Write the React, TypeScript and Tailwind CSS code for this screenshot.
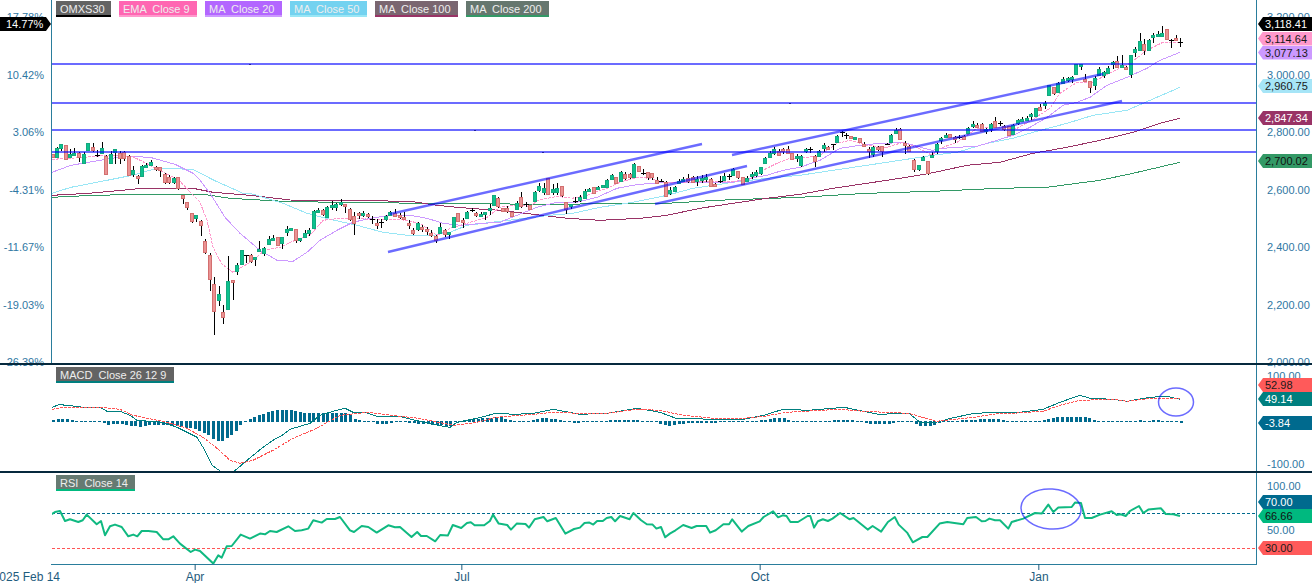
import React from "react";

type P = [number, number];
type C = [number, number, number, number, number, number];

const T = (ox: number, oy: number, sx: number, sy: number, a: P[]): P[] =>
  a.map(([x, y]) => [ox + x / sx, oy + y / sy] as P);
const TC = (ox: number, oy: number, sx: number, sy: number, a: C[]): C[] =>
  a.map(([x, k, t, b, h, l]) => [ox + x / sx, k, oy + t / sy, oy + b / sy, oy + h / sy, oy + l / sy] as C);
const pts = (a: P[]) => a.map((p) => p[0].toFixed(1) + "," + (p[1] + 0.3).toFixed(1)).join(" ");

// x, kind (0 red, 1 green, 2 black doji), body top, body bottom, high, low
const candles: C[] = [
  ...TC(0, 0, 2.8, 3, [
    [147, 0, 462, 470, 462, 470], [159, 1, 445, 470, 440, 470], [170, 1, 433, 443, 432, 452], [184, 0, 436, 477, 434, 478],
    [196, 1, 462, 472, 448, 475], [208, 1, 459, 463, 445, 470], [221, 0, 459, 472, 456, 485], [235, 1, 463, 488, 455, 489],
    [246, 1, 429, 449, 428, 450], [260, 0, 442, 450, 430, 458], [272, 2, 464, 464, 450, 470], [285, 1, 445, 459, 426, 463],
    [297, 0, 467, 521, 466, 522], [310, 1, 462, 490, 452, 492], [321, 1, 448, 456, 446, 490], [335, 0, 458, 475, 453, 492],
    [347, 0, 455, 475, 453, 482], [360, 0, 467, 525, 466, 528], [372, 1, 511, 521, 499, 532], [385, 0, 528, 533, 526, 552],
    [397, 1, 497, 527, 496, 532], [410, 1, 496, 498, 490, 502], [422, 1, 487, 495, 480, 497], [437, 0, 502, 507, 497, 512],
    [449, 0, 502, 509, 500, 530], [462, 0, 522, 545, 520, 552], [473, 0, 531, 545, 525, 552], [487, 1, 534, 545, 530, 552],
    [498, 0, 532, 565, 530, 568],
  ]),
  ...TC(150, 180, 3, 3, [
    [98, 0, 45, 53, 45, 72], [110, 0, 67, 80, 65, 90], [125, 0, 100, 122, 98, 128], [138, 1, 106, 113, 104, 125], [152, 0, 123, 134, 120, 167],
    [165, 0, 183, 215, 178, 224], [180, 0, 225, 298, 220, 333], [191, 0, 312, 392, 292, 465], [206, 1, 343, 359, 318, 378], [218, 0, 397, 410, 375, 432],
    [233, 1, 303, 386, 228, 386], [248, 0, 301, 307, 300, 360], [261, 1, 256, 274, 250, 285], [275, 1, 211, 251, 210, 252], [288, 2, 226, 226, 226, 250],
    [302, 0, 226, 242, 222, 250], [315, 1, 232, 238, 232, 260], [328, 1, 208, 211, 183, 215], [341, 1, 203, 218, 201, 228], [356, 1, 178, 191, 168, 192],
    [369, 1, 175, 178, 166, 180], [384, 0, 172, 194, 172, 200], [396, 1, 172, 188, 170, 207], [410, 1, 147, 155, 138, 168], [422, 1, 145, 151, 145, 152],
    [437, 0, 148, 180, 147, 188], [449, 1, 175, 179, 174, 187], [465, 1, 160, 171, 150, 175], [477, 1, 150, 160, 145, 170], [491, 1, 94, 143, 90, 144],
    [504, 1, 91, 93, 85, 95], [519, 0, 91, 102, 88, 108], [531, 1, 80, 110, 78, 111], [546, 1, 75, 80, 62, 90], [558, 1, 72, 82, 70, 95],
    [572, 1, 65, 72, 58, 80], [585, 0, 72, 76, 71, 97], [599, 0, 87, 116, 85, 125], [612, 0, 108, 130, 95, 165], [626, 0, 100, 102, 95, 115],
    [639, 1, 100, 106, 92, 110], [653, 0, 102, 105, 98, 112], [666, 2, 118, 118, 108, 132], [680, 0, 129, 133, 118, 148], [693, 2, 125, 125, 118, 145],
    [707, 1, 108, 118, 105, 122], [720, 1, 97, 105, 92, 106], [735, 0, 100, 108, 88, 110], [749, 0, 105, 108, 100, 118], [761, 0, 110, 116, 96, 118],
    [776, 0, 129, 133, 120, 147], [789, 0, 150, 160, 145, 165], [803, 1, 130, 147, 125, 152], [816, 0, 142, 148, 135, 155], [830, 0, 147, 151, 140, 163],
    [843, 0, 160, 164, 150, 170], [857, 0, 168, 180, 165, 190], [870, 1, 142, 158, 130, 160], [885, 0, 150, 163, 147, 170], [896, 1, 157, 160, 157, 177],
    [911, 1, 112, 141, 110, 142], [924, 0, 100, 122, 100, 127], [938, 0, 120, 125, 115, 145], [951, 1, 97, 113, 92, 115], [965, 2, 90, 90, 83, 97],
    [978, 0, 100, 106, 95, 110], [992, 1, 101, 106, 96, 112], [1005, 1, 97, 103, 95, 118], [1019, 1, 85, 90, 73, 105], [1032, 1, 46, 75, 45, 78],
    [1045, 0, 55, 78, 50, 82],
  ]),
  ...TC(500, 120, 3, 3, [
    [9, 0, 265, 272, 263, 276], [22, 0, 263, 272, 258, 278], [36, 0, 275, 288, 275, 290], [51, 1, 248, 266, 243, 270], [63, 0, 232, 257, 215, 262],
    [77, 2, 252, 252, 245, 260], [90, 0, 256, 266, 255, 270], [105, 1, 216, 242, 213, 243], [117, 1, 198, 209, 188, 215], [131, 1, 205, 215, 190, 225],
    [144, 0, 175, 221, 173, 222], [158, 1, 208, 215, 192, 225], [171, 1, 205, 216, 190, 225], [185, 0, 198, 226, 197, 230], [198, 0, 246, 268, 245, 280],
    [212, 1, 252, 256, 251, 265], [226, 2, 243, 243, 232, 248], [239, 1, 232, 240, 225, 245], [255, 1, 214, 235, 208, 238], [267, 1, 208, 212, 205, 215],
    [282, 0, 202, 218, 200, 220], [294, 1, 202, 206, 198, 210], [308, 1, 196, 201, 195, 205], [321, 1, 180, 200, 178, 205], [335, 1, 166, 176, 162, 180],
    [348, 0, 172, 188, 170, 192], [362, 1, 156, 184, 153, 185], [375, 0, 163, 173, 155, 178], [389, 0, 163, 172, 160, 178], [402, 1, 132, 172, 130, 175],
    [417, 0, 138, 152, 137, 153], [429, 2, 160, 160, 148, 165], [444, 0, 157, 170, 156, 180], [456, 0, 160, 172, 158, 180], [471, 0, 180, 189, 172, 192],
    [483, 2, 183, 183, 178, 187], [498, 0, 186, 228, 183, 228], [510, 1, 210, 218, 202, 225], [525, 1, 201, 212, 198, 215], [537, 1, 183, 187, 178, 192],
    [550, 1, 176, 181, 172, 188], [564, 0, 175, 184, 162, 188], [579, 0, 170, 186, 168, 188], [590, 1, 176, 180, 168, 197], [605, 1, 173, 176, 165, 190],
    [618, 1, 172, 177, 162, 185], [632, 0, 176, 198, 175, 200], [645, 0, 192, 197, 190, 200], [659, 2, 183, 183, 168, 188], [672, 1, 168, 180, 160, 185],
    [686, 2, 168, 168, 162, 180], [699, 1, 148, 165, 143, 168], [714, 0, 153, 172, 152, 175], [729, 0, 172, 192, 170, 195], [741, 1, 174, 182, 168, 185],
    [755, 1, 163, 168, 155, 175], [768, 1, 156, 166, 150, 170], [782, 1, 142, 160, 140, 165], [795, 1, 114, 128, 112, 130], [809, 1, 98, 110, 92, 112],
    [822, 1, 88, 100, 80, 105], [836, 0, 92, 104, 88, 107], [849, 0, 88, 92, 85, 102], [863, 0, 88, 98, 78, 100], [876, 0, 98, 118, 98, 120],
    [890, 1, 107, 112, 103, 127],
  ]),
  ...TC(800, 60, 3, 3, [
    [4, 1, 287, 316, 285, 320], [17, 1, 266, 272, 264, 280], [29, 2, 268, 268, 262, 278], [44, 0, 288, 303, 285, 320], [57, 1, 272, 288, 270, 290],
    [71, 1, 256, 265, 250, 278], [84, 0, 262, 267, 258, 270], [98, 2, 253, 253, 252, 270], [111, 1, 229, 245, 226, 247], [125, 2, 217, 217, 212, 230],
    [138, 2, 224, 224, 220, 237], [152, 0, 228, 235, 227, 237], [165, 1, 232, 234, 230, 240], [180, 0, 235, 247, 234, 248], [192, 0, 252, 256, 245, 258],
    [207, 0, 266, 274, 262, 296], [219, 1, 260, 281, 258, 290], [233, 0, 262, 267, 258, 272], [246, 0, 258, 273, 257, 290], [260, 2, 253, 253, 248, 256],
    [273, 1, 226, 245, 222, 248], [288, 1, 210, 218, 203, 222], [299, 0, 208, 236, 203, 238], [315, 0, 248, 254, 242, 280], [327, 0, 257, 272, 255, 275],
    [342, 0, 300, 327, 296, 335], [356, 1, 316, 326, 314, 332], [369, 1, 290, 301, 287, 303], [384, 0, 303, 340, 302, 344], [396, 1, 285, 290, 276, 292],
    [411, 1, 253, 274, 248, 280], [423, 1, 234, 239, 230, 250], [438, 1, 225, 232, 220, 236], [450, 0, 223, 231, 222, 233], [464, 0, 232, 236, 228, 248],
    [477, 2, 232, 232, 226, 238], [491, 0, 228, 236, 225, 240], [504, 1, 204, 218, 200, 220], [519, 1, 193, 197, 183, 203], [532, 0, 194, 196, 188, 204],
    [546, 0, 193, 214, 190, 216], [559, 1, 207, 212, 205, 222], [573, 1, 192, 208, 188, 215], [585, 0, 183, 202, 172, 204], [600, 2, 189, 189, 182, 197],
    [613, 0, 197, 208, 195, 212], [627, 0, 199, 224, 198, 225], [640, 1, 195, 222, 192, 225], [654, 1, 180, 190, 178, 195], [667, 1, 178, 183, 172, 188],
    [682, 1, 174, 178, 168, 182], [694, 1, 162, 166, 158, 178], [709, 1, 144, 167, 143, 168], [720, 0, 142, 150, 132, 152], [735, 1, 128, 136, 122, 147],
    [747, 1, 76, 104, 74, 108], [762, 0, 82, 98, 80, 105], [774, 1, 68, 97, 66, 98], [789, 1, 58, 68, 52, 72], [803, 1, 55, 60, 50, 65],
    [816, 1, 52, 58, 48, 70], [829, 1, 13, 41, 12, 42], [842, 1, 11, 16, 11, 30], [856, 0, 57, 62, 42, 63], [870, 0, 64, 82, 62, 97],
    [884, 1, 55, 75, 48, 90], [897, 1, 28, 46, 20, 48], [911, 1, 35, 44, 32, 52], [924, 1, 24, 40, 18, 42], [938, 1, 6, 9, 2, 25],
    [951, 0, 2, 22, -12, 25], [965, 1, 14, 20, -15, 22], [978, 0, 22, 28, 18, 30],
  ]),
  ...TC(1000, 0, 3, 3, [
    [392, 1, 165, 222, 165, 233], [405, 1, 148, 155, 140, 170], [419, 1, 124, 150, 98, 152], [431, 0, 132, 150, 118, 165], [447, 1, 120, 150, 118, 155],
    [459, 1, 105, 108, 100, 130], [473, 1, 102, 105, 92, 110], [485, 1, 100, 108, 78, 112], [501, 0, 88, 118, 88, 120], [513, 2, 121, 121, 118, 143],
    [527, 0, 114, 120, 105, 123], [540, 2, 125, 125, 115, 140],
  ]),
];

const ema: P[] = [[52,159],[71,158],[107,155],[132,156],[150,165],[164,172],[179,180],[200,202],[207,220],[213,247],[222,264],[233,272],[250,262],[265,250],[280,247],[295,240],[310,235],[323,220],[340,218],[355,218],[370,219],[400,219],[420,223],[437,235],[450,228],[467,223],[487,217],[500,207],[515,205],[530,206],[538,200],[557,196],[572,198],[587,195],[607,188],[620,182],[637,177],[650,178],[663,182],[680,182],[700,181],[717,181],[733,181],[748,180],[763,170],[777,163],[790,158],[800,158],[820,155],[837,143],[850,140],[867,145],[887,147],[903,142],[917,147],[932,155],[940,148],[957,142],[977,128],[1000,127],[1017,128],[1033,119],[1050,108],[1060,93],[1077,82],[1093,82],[1107,74],[1130,63],[1147,50],[1163,42],[1180,42]];
const ma20: P[] = [[52,172],[71,165],[100,160],[125,156],[150,157],[175,164],[193,173],[200,180],[210,193],[225,217],[240,233],[260,250],[277,260],[293,261],[307,252],[320,240],[337,230],[353,222],[370,218],[390,215],[410,215],[427,218],[443,223],[460,225],[483,223],[500,222],[517,215],[537,207],[557,202],[577,202],[597,197],[617,188],[633,185],[650,183],[667,182],[700,182],[733,182],[750,178],[767,175],[783,170],[800,167],[820,160],[840,148],[867,144],[887,143],[903,142],[917,146],[932,150],[943,148],[957,147],[977,146],[997,140],[1013,135],[1030,127],[1047,117],[1063,105],[1077,102],[1090,97],[1107,85],[1127,77],[1147,68],[1160,60],[1180,52]];
const ma50: P[] = [[52,193],[71,187],[107,180],[132,175],[157,168],[193,169],[214,180],[243,193],[250,193],[283,203],[307,213],[330,219],[357,225],[383,232],[407,235],[433,235],[450,232],[467,225],[500,221],[550,215],[573,213],[600,207],[633,202],[667,195],[693,188],[713,185],[733,182],[767,178],[800,175],[833,170],[867,165],[900,160],[933,155],[957,152],[987,143],[1013,138],[1033,132],[1067,123],[1093,115],[1127,110],[1150,100],[1180,87]];
const ma100: P[] = [[52,195],[89,193],[143,188],[179,188],[193,188],[213,192],[250,195],[293,200],[337,200],[410,201],[437,205],[457,207],[483,209],[500,210],[533,214],[567,218],[600,220],[640,218],[667,215],[700,208],[733,203],[767,198],[800,194],[833,188],[867,183],[900,178],[930,173],[967,165],[1000,162],[1033,153],[1067,147],[1100,140],[1133,132],[1160,123],[1180,118]];
const ma200: P[] = [[52,197],[93,195],[150,194],[203,194],[230,198],[283,201],[333,202],[427,203],[543,204],[667,203],[717,200],[800,197],[867,193],[933,191],[1000,188],[1047,187],[1100,180],[1133,173],[1180,162]];

const macd: P[] = [[52,407],[60,404],[65,405],[77,406],[82,407],[100,407],[107,411],[120,411],[130,415],[137,420],[163,422],[177,427],[197,437],[203,447],[212,465],[222,472],[233,472],[247,460],[263,447],[273,440],[282,435],[290,429],[310,423],[320,415],[333,411],[345,408],[353,412],[365,412],[377,416],[400,416],[411,419],[438,425],[450,427],[457,422],[477,418],[496,413],[515,414],[534,413],[553,409],[580,414],[607,413],[637,408],[660,412],[676,418],[714,419],[744,419],[764,415],[783,409],[809,410],[844,407],[878,414],[909,413],[920,422],[936,422],[951,418],[974,413],[1000,412],[1020,412],[1043,409],[1060,402],[1080,395],[1090,398],[1113,399],[1127,401],[1150,397],[1167,396],[1180,399]];
const signal: P[] = [[52,409],[63,407],[100,407],[120,409],[133,415],[167,422],[187,428],[203,437],[217,448],[230,460],[240,463],[253,460],[273,450],[293,438],[317,428],[340,415],[367,412],[400,416],[419,418],[438,422],[454,425],[477,422],[496,417],[534,414],[553,412],[580,413],[607,413],[637,409],[660,410],[683,415],[714,418],[744,418],[764,416],[787,412],[840,409],[863,411],[909,413],[936,421],[974,417],[1000,413],[1013,413],[1043,411],[1060,405],[1080,400],[1113,399],[1127,401],[1150,398],[1180,398]];

const histKeys: P[] = [[53,2.3],[57,3.3],[61,3.3],[66,2.7],[70,2.3],[75,1.5],[80,1],[84,.7],[88,1],[93,.7],[97,.5],[102,-.7],[107,-3.7],[120,-3],[125,-4],[134,-5],[138,-6.3],[143,-5.7],[147,-4.7],[152,-4],[161,-4],[170,-4.7],[174,-5.3],[183,-6],[188,-7],[197,-8.7],[202,-10.7],[206,-12.7],[211,-16],[215,-20],[220,-20],[224,-19.3],[229,-16],[233,-12],[238,-8],[242,-2],[247,2],[251,4],[256,5],[260,7.3],[265,9],[269,10.7],[274,11.7],[292,11.7],[296,10.7],[301,10],[305,9.3],[310,9],[345,9],[350,8],[354,3],[359,2],[363,1],[368,.7],[373,-1],[377,-2.5],[390,-2.5],[395,-1.5],[400,-1],[410,-2],[420,-3],[430,-3.5],[445,-4.5],[450,-5],[453,-1],[461,1],[467,1.5],[473,2.5],[480,3.5],[492,4],[496,5],[501,4.5],[507,2.5],[513,1],[522,1],[530,1.5],[535,2],[540,3.5],[550,3.5],[555,3],[559,2],[563,.5],[568,-.5],[572,-2],[580,-2],[585,-1],[590,-.5],[595,-.5],[603,1],[608,1.5],[614,2],[625,2],[631,2.5],[637,2],[645,1],[653,0],[660,-2.5],[666,-4.5],[670,-4.5],[675,-3.5],[685,-2.5],[700,-2],[710,-1.5],[716,-2.5],[721,-.5],[727,.5],[733,1],[744,.5],[750,0],[763,2],[767,2.5],[773,4],[780,4.5],[785,3.5],[792,1],[800,1],[811,0],[832,1.5],[845,2],[852,1.5],[857,0],[863,-1],[869,-2.5],[880,-3],[892,-2.5],[898,-.5],[905,-.5],[913,-1.5],[919,-4.5],[924,-5.5],[930,-5],[936,-3],[941,-1.5],[947,1],[958,1.5],[972,2],[980,3],[1000,3],[1006,1],[1027,-1],[1040,1.5],[1048,3],[1058,5],[1085,5],[1091,3],[1095,1],[1105,.3],[1122,-.5],[1127,-.5],[1132,.3],[1140,2],[1145,1],[1149,1.5],[1162,1.5],[1167,.7],[1172,-.7],[1176,-1],[1181,-2.5]];
const interp = (x: number) => {
  for (let i = 1; i < histKeys.length; i++) {
    if (x <= histKeys[i][0]) {
      const [a, b] = histKeys[i - 1];
      const [c, d] = histKeys[i];
      return b + ((d - b) * (x - a)) / (c - a);
    }
  }
  return -2.5;
};
const bars = Array.from({ length: 248 }, (_, i) => {
  const x = 53.3 + 4.564 * i;
  return [x, interp(x)] as P;
});

const rsi: P[] = [
  ...T(0, 350, 3, 3, [[155,492],[165,485],[180,482],[195,512],[210,507],[235,515],[248,510],[260,493],[290,522],[303,512],[315,555],[330,528],[345,523],[365,530],[385,558],[400,553],[412,558],[425,542],[445,542],[470,545],[490,567],[505,567],[520,558],[540,580],[572,605],[585,598],[600,602],[640,640],[655,615],[665,622],[680,588],[695,587],[722,553],[750,565],[780,550],[795,552],[810,542],[830,545],[865,528],[885,542],[905,540],[925,535],[940,510],[965,517],[980,506],[1005,506],[1020,500],[1050,540],[1062,545],[1085,527],[1105,530],[1130,547],[1165,525],[1185,531],[1200,530]]),
  ...T(400, 370, 2.613, 3, [[0,470],[30,500],[45,485],[55,497],[70,497],[92,513],[105,494],[125,496],[138,464],[160,473],[175,458],[185,456],[195,465],[220,465],[235,452],[243,433],[258,460],[280,464],[290,478],[305,460],[328,461],[337,472],[352,447],[375,440],[385,453],[407,443],[432,490],[455,476],[470,472],[482,458],[495,457],[505,463],[515,452],[530,452],[540,443],[552,440],[562,453],[575,437],[600,447],[610,428],[630,450],[645,462],[660,463],[670,475],[682,470],[693,501],[705,490],[720,480],[740,464],[762,473],[775,467],[800,467],[810,487],[825,480],[845,462],[860,462],[868,447],[893,484],[910,467],[940,453],[950,440],[975,423],[988,441],[1000,435],[1010,437],[1020,455],[1040,455],[1065,437],[1072,437],[1082,472],[1092,453],[1105,447],[1118,452],[1130,445],[1150,428],[1175,447],[1185,443],[1222,478],[1235,467],[1257,484],[1275,455],[1293,440],[1303,463],[1325,487],[1340,516],[1365,500],[1378,500],[1410,460],[1430,455],[1472,462],[1482,443],[1505,440],[1520,453],[1530,452],[1540,445],[1555,450]]),
  ...T(1000, 350, 3, 3, [[0,510],[25,535],[35,515],[70,505],[105,488],[125,490],[145,463],[160,485],[175,472],[215,470],[225,457],[243,458],[255,503],[275,503],[300,493],[335,483],[350,494],[362,492],[377,497],[390,482],[417,467],[430,488],[445,478],[483,474],[497,491],[520,492],[540,497]]),
];

const trendlines: [number, number, number, number][] = [
  [390, 214, 702, 144],
  [388, 252, 747, 166],
  [655, 204, 1122, 101],
  [732, 155, 1103, 74],
];
const levels = [64, 103, 130, 152];
const anchors: P[] = [[250, 64], [790, 103], [475, 130], [543, 152]];

const Tag = ({ y, text, cls }: { y: number; text: string; cls: string }) => (
  <div
    className={"absolute left-[1px] right-0 h-[14px] pl-[7px] leading-[14px] text-[11px] [clip-path:polygon(5px_0,100%_0,100%_100%,5px_100%,0_50%)] " + cls}
    style={{ top: y - 7 }}
  >
    {text}
  </div>
);

const Tick = ({ text }: { text: string }) => <div className="h-[14px] leading-[14px]">{text}</div>;

const Legend = ({ text, cls }: { text: string; cls: string }) => (
  <div className={"h-[16px] border-b-2 pl-[4px] pt-[1px] leading-[14px] text-[11px] text-[#eeeeee] whitespace-pre " + cls}>{text}</div>
);

const Poly = ({ p, c, w = 1, dash, crisp = true }: { p: P[]; c: string; w?: number; dash?: string; crisp?: boolean }) => (
  <polyline
    points={pts(p)}
    fill="none"
    stroke={c}
    strokeWidth={w}
    strokeDasharray={dash}
    strokeLinejoin="round"
    shapeRendering={crisp ? "crispEdges" : "geometricPrecision"}
  />
);

const Candle = ({ c }: { c: C }) => {
  const [x, k, t, b, h, l] = c;
  const cx = Math.round(x);
  if (k === 2) {
    return (
      <g shapeRendering="crispEdges">
        <rect x={cx} y={h} width={1} height={l - h} fill="#000" />
        <rect x={cx - 2} y={Math.round(t)} width={5} height={1} fill="#000" />
      </g>
    );
  }
  const top = Math.round(t);
  const hgt = Math.max(2, Math.round(b) - top);
  return (
    <g shapeRendering="crispEdges">
      <rect x={cx} y={Math.round(h)} width={1} height={Math.max(1, Math.round(l - h))} fill="#000" />
      <rect
        x={cx - 1.5}
        y={top + 0.5}
        width={3}
        height={hgt}
        fill={k === 1 ? "#0cc28e" : "#e99393"}
        stroke={k === 1 ? "#14a87e" : "#d36f6f"}
        strokeWidth={1}
      />
    </g>
  );
};

const Sep = () => <div className="relative z-10 h-[2px] w-full shrink-0 bg-[#06293d]" />;

export default function App() {
  return (
    <div className="flex h-[583px] w-[1312px] flex-col overflow-hidden bg-white [font-family:'Liberation_Sans',Arial,sans-serif]">
      {/* price pane */}
      <div className="flex h-[363px] shrink-0">
        <div className="relative flex w-[52px] shrink-0 flex-col items-end gap-[43.5px] border-r border-[#2a7d9c] pr-[7px] pt-[10px] text-[11px] text-[#2f77a3]">
          {["17.78%", "10.42%", "3.06%", "-4.31%", "-11.67%", "-19.03%", "-26.39%"].map((t) => (
            <Tick key={t} text={t} />
          ))}
          <div className="absolute left-0 top-[17px] h-[14px] w-[51px] pl-[6px] leading-[14px] text-white bg-black [clip-path:polygon(0_0,calc(100%-5px)_0,100%_50%,calc(100%-5px)_100%,0_100%)]">
            14.77%
          </div>
        </div>

        <div className="relative flex-1">
          <svg className="absolute inset-0 h-full w-full" viewBox="52 0 1204 363">
            <Poly p={ma200} c="#339966" />
            <Poly p={ma100} c="#993366" />
            <Poly p={ma50} c="#99e6f5" />
            <Poly p={ma20} c="#cc99ff" />
            <Poly p={ema} c="#ff99cc" dash="3 1" />
            {candles.map((c, i) => (
              <Candle key={i} c={c} />
            ))}
            {levels.map((y) => (
              <rect key={y} x={52} y={y - 1} width={1204} height={2} fill="#0000ff" fillOpacity={0.58} shapeRendering="crispEdges" />
            ))}
            {trendlines.map(([a, b, c, d], i) => (
              <line key={i} x1={a} y1={b} x2={c} y2={d} stroke="#0000ff" strokeOpacity={0.58} strokeWidth={2.4} />
            ))}
            {anchors.map(([x, y]) => (
              <rect key={x} x={x - 1} y={y - 0.5} width={2} height={1} fill="#2020a0" shapeRendering="crispEdges" />
            ))}
          </svg>
          <div className="absolute left-[4px] top-[1px] flex gap-[8px]">
            <Legend text="OMXS30" cls="w-[55px] bg-[#636363] border-black" />
            <Legend text="EMA  Close 9" cls="w-[78px] bg-[#ff66b2] border-[#ff99cc]" />
            <Legend text="MA  Close 20" cls="w-[77px] bg-[#b366ff] border-[#cc99ff]" />
            <Legend text="MA  Close 50" cls="w-[77px] bg-[#73d2f0] border-[#99e6f5]" />
            <Legend text="MA  Close 100" cls="w-[83px] bg-[#7a6670] border-[#993366]" />
            <Legend text="MA  Close 200" cls="w-[83px] bg-[#66776f] border-[#339966]" />
          </div>
        </div>

        <div className="relative flex w-[56px] shrink-0 flex-col gap-[43.5px] border-l border-[#2a7d9c] pl-[10px] pt-[10px] text-[11px] text-[#2f77a3]">
          {["3,200.00", "3,000.00", "2,800.00", "2,600.00", "2,400.00", "2,200.00", "2,000.00"].map((t) => (
            <Tick key={t} text={t} />
          ))}
          <Tag y={24} text="3,118.41" cls="bg-black text-white" />
          <Tag y={38.5} text="3,114.64" cls="bg-[#ff99cc] text-[#1a1a1a]" />
          <Tag y={52.5} text="3,077.13" cls="bg-[#cc99ff] text-[#1a1a1a]" />
          <Tag y={86} text="2,960.75" cls="bg-[#a6e5f7] text-[#1a1a1a]" />
          <Tag y={118} text="2,847.34" cls="bg-[#993366] text-white" />
          <Tag y={161} text="2,700.02" cls="bg-[#339966] text-[#111111]" />
        </div>
      </div>

      <Sep />

      {/* MACD pane */}
      <div className="flex h-[106px] shrink-0">
        <div className="w-[52px] shrink-0" />
        <div className="relative flex-1 overflow-hidden">
          <svg className="absolute inset-0 h-full w-full" viewBox="52 365 1204 106">
            {bars.map(([x, h], i) => {
              const hh = Math.max(1, Math.round(Math.abs(h)));
              return (
                <rect
                  key={i}
                  x={Math.round(x) - 1}
                  y={h >= 0 ? 422 - hh : 421}
                  width={3}
                  height={hh}
                  fill="#006a8e"
                  shapeRendering="crispEdges"
                />
              );
            })}
            <Poly p={macd} c="#007f7f" />
            <Poly p={signal} c="#ff5555" dash="3 1" />
            <ellipse cx={1176} cy={402} rx={17.5} ry={14} fill="none" stroke="#0000ff" strokeOpacity={0.58} strokeWidth={1.5} />
          </svg>
          <div className="absolute left-[4px] top-[2px] flex">
            <Legend text="MACD  Close 26 12 9" cls="w-[118px] bg-[#636363] border-[#007f7f]" />
          </div>
        </div>
        <div className="relative flex w-[56px] shrink-0 flex-col gap-[74px] border-l border-[#2a7d9c] pl-[10px] pt-[4px] text-[11px] text-[#2f77a3]">
          <Tick text="100.00" />
          <Tick text="-100.00" />
          <Tag y={20} text="52.98" cls="bg-[#ff5a5a] text-[#1a1a1a]" />
          <Tag y={34} text="49.14" cls="bg-[#007f7f] text-white" />
          <Tag y={58} text="-3.84" cls="bg-[#006a8e] text-white" />
        </div>
      </div>

      <Sep />

      {/* RSI pane */}
      <div className="flex h-[91px] shrink-0">
        <div className="w-[52px] shrink-0" />
        <div className="relative flex-1 overflow-hidden">
          <svg className="absolute inset-0 h-full w-full" viewBox="52 473 1204 91">
            <line x1={52} y1={513.5} x2={1256} y2={513.5} stroke="#006a8e" strokeDasharray="3 2" shapeRendering="crispEdges" />
            <line x1={52} y1={548.5} x2={1256} y2={548.5} stroke="#ff5555" strokeDasharray="3 2" shapeRendering="crispEdges" />
            <Poly p={rsi} c="#10b981" w={2} crisp={false} />
            <ellipse cx={1051} cy={509} rx={30} ry={20} fill="none" stroke="#0000ff" strokeOpacity={0.58} strokeWidth={1.5} transform="rotate(4 1051 509)" />
          </svg>
          <div className="absolute left-[4px] top-[2px] flex">
            <Legend text="RSI  Close 14" cls="w-[79px] bg-[#667a72] border-[#00b97f]" />
          </div>
        </div>
        <div className="relative flex w-[56px] shrink-0 flex-col gap-[30px] border-l border-[#2a7d9c] pl-[10px] pt-[6px] text-[11px] text-[#2f77a3]">
          <Tick text="100.00" />
          <Tick text="50.00" />
          <Tag y={29} text="70.00" cls="bg-[#006a8e] text-white" />
          <Tag y={43} text="66.66" cls="bg-[#00b97f] text-[#111111]" />
          <Tag y={75} text="30.00" cls="bg-[#ff5a5a] text-[#1a1a1a]" />
        </div>
      </div>

      {/* time axis */}
      <div className="relative flex-1">
        <div className="ml-[51px] mr-[55px] h-[1px] bg-[#2a7d9c]" />
        <div className="absolute right-[1252px] top-[6px] whitespace-nowrap text-[12px] leading-[14px] text-[#1f5c7e]">2025 Feb 14</div>
        {[
          [195, "Apr"], [462, "Jul"], [760, "Oct"], [1039, "Jan"],
        ].map(([x, t]) => (
          <div key={t as string} className="absolute top-0 flex -translate-x-1/2 flex-col items-center" style={{ left: x as number }}>
            <div className="h-[6px] w-[1px] bg-[#1f5c7e]" />
            <div className="text-[12px] leading-[14px] text-[#1f5c7e]">{t}</div>
          </div>
        ))}
      </div>
    </div>
  );
}
